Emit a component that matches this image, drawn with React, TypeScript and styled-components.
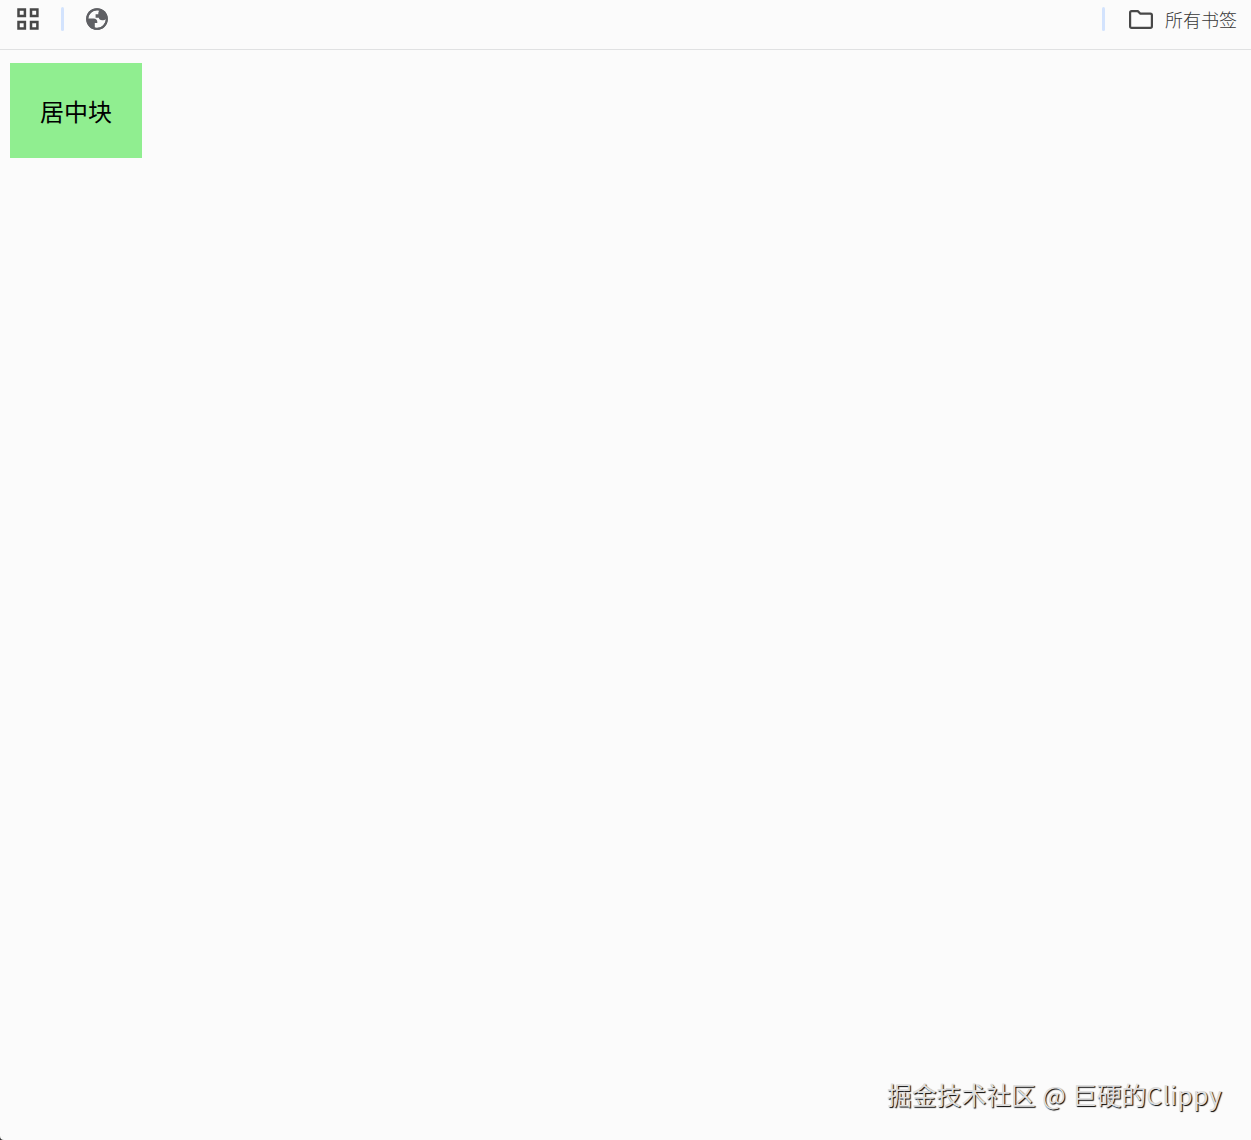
import React from 'react';
import styled, { createGlobalStyle } from 'styled-components';

const GlobalStyle = createGlobalStyle`
  body { margin: 0; background: #fbfbfb; font-family: "Noto Sans CJK SC", sans-serif; }
  * { box-sizing: border-box; }
`;
const Page = styled.div`
  height: 1140px;
  display: flex;
  flex-direction: column;
  overflow: hidden;
`;
const BookmarkBar = styled.header`
  height: 50px;
  padding: 7px 14px 0 17px;
  display: flex;
  align-items: flex-start;
  justify-content: space-between;
  border-bottom: 1px solid #e0e1e2;
`;
const Group = styled.div`
  display: flex;
  align-items: center;
  height: 24px;
`;
const Divider = styled.span<{ $before: number; $after: number }>`
  width: 3px;
  height: 24px;
  border-radius: 2px;
  background: #d3e3fd;
  margin: 0 ${p => p.$after}px 0 ${p => p.$before}px;
`;
const BookmarkLabel = styled.span`
  margin-left: 12px;
  font-size: 18px;
  font-weight: 300;
  line-height: 24px;
  color: #383838;
`;
const Content = styled.main`
  flex: 1;
  padding: 13px 10px;
`;
const Block = styled.div`
  width: 132px;
  height: 95px;
  padding: 30px;
  background: #90ee90;
  color: #000;
  font-size: 24px;
  line-height: 36px;
  white-space: nowrap;
`;
const Footer = styled.footer`
  display: flex;
  align-items: flex-end;
  justify-content: space-between;
  height: 70px;
`;
const Corner = styled.svg`
  display: block;
`;
const Watermark = styled.div`
  align-self: flex-start;
  margin: 7px 29px 0 0;
  font-size: 24.8px;
  line-height: 35px;
  word-spacing: 0.8px;
  color: #dedede;
  text-shadow: 1px 1px 1px #000;
  white-space: nowrap;
`;
const Author = styled.span`
  letter-spacing: 0.4px;
`;

const AppsIcon = () => (
  <svg width="22" height="22" viewBox="0 0 22 22" fill="none" stroke="#484848" strokeWidth="2.5">
    <path d="M1.5 1.5h6.4v6.4H1.5zM14 1.5h6.4v6.4H14zM1.5 14h6.4v6.4H1.5zM14 14h6.4v6.4H14z" />
  </svg>
);
const GlobeIcon = () => (
  <svg width="22" height="22" viewBox="0 0 22 22">
    <circle cx="11" cy="11" r="10.8" fill="#5f6064" />
    <path
      d="M13.6 2.4C8.5 1.2 3 4.6 2.3 10.4h5.4c2.2 0 3.6 1.4 3.6 3.3v1.4H8.8v4.6c4.4 1.1 8.8-1.2 10.5-5.4.4-1 .6-2.2.6-3.4-1 1-2.2 1.3-3.7 1.3-2.1 0-3.2-1-3.4-2.5H9.6V6.3h2.7c0-1.9.1-2.9 1.3-3.9z"
      fill="#fbfbfb"
    />
    <circle cx="11" cy="11" r="9.8" fill="none" stroke="#5f6064" strokeWidth="2" />
  </svg>
);
const FolderIcon = () => (
  <svg width="24" height="19" viewBox="0 0 24 19" fill="none" stroke="#484848" strokeWidth="2.2" strokeLinejoin="round">
    <path d="M2.6 1.1H8.8l2.6 2.6h9.9q1.6 0 1.6 1.6v10.9q0 1.6-1.6 1.6H2.7q-1.6 0-1.6-1.6V2.7q0-1.6 1.5-1.6z" />
  </svg>
);

export default function App() {
  return (
    <Page>
      <GlobalStyle />
      <BookmarkBar>
        <Group>
          <AppsIcon />
          <Divider $before={22} $after={22} />
          <GlobeIcon />
        </Group>
        <Group>
          <Divider $before={0} $after={24} />
          <FolderIcon />
          <BookmarkLabel>所有书签</BookmarkLabel>
        </Group>
      </BookmarkBar>
      <Content>
        <Block>居中块</Block>
      </Content>
      <Footer>
        <Corner width="4" height="4" viewBox="0 0 4 4">
          <path d="M0 0Q0 4 4 4H0z" fill="#333" />
        </Corner>
        <Watermark>掘金技术社区 @ 巨硬的<Author>Clippy</Author></Watermark>
      </Footer>
    </Page>
  );
}
